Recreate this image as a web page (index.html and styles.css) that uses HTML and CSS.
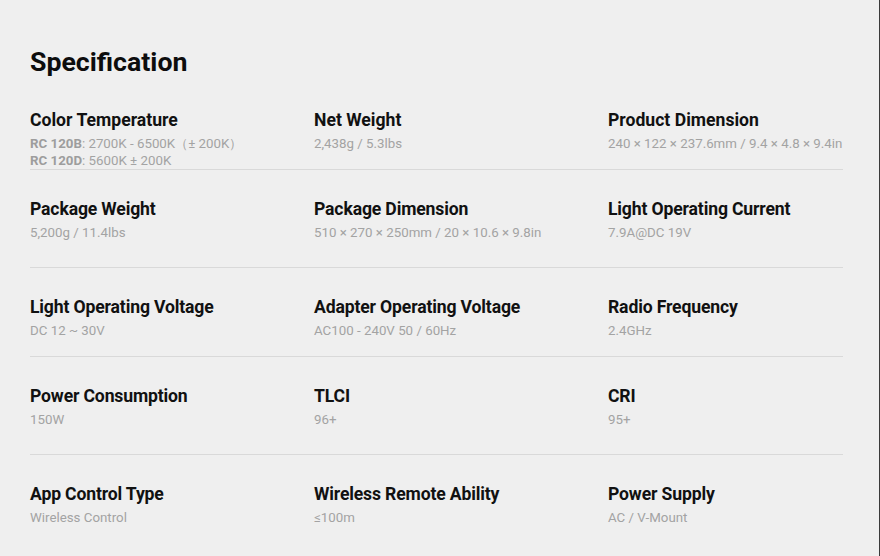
FILE: index.html
```html
<!DOCTYPE html>
<html lang="en">
<head>
<meta charset="utf-8">
<title>Specification</title>
<link rel="stylesheet" href="styles.css">
</head>
<body>
<main class="page">
  <h1 class="title">Specification</h1>
  <section class="spec-row row-1">
    <div class="spec spec-c1">
      <div class="label">Color Temperature</div>
      <div class="value"><b>RC 120B</b>: 2700K - 6500K（± 200K）</div>
      <div class="value"><b>RC 120D</b>: 5600K ± 200K</div>
    </div>
    <div class="spec spec-c2">
      <div class="label">Net Weight</div>
      <div class="value">2,438g / 5.3lbs</div>
    </div>
    <div class="spec spec-c3">
      <div class="label">Product Dimension</div>
      <div class="value">240 × 122 × 237.6mm / 9.4 × 4.8 × 9.4in</div>
    </div>
  </section>
  <section class="spec-row row-2">
    <div class="spec">
      <div class="label">Package Weight</div>
      <div class="value">5,200g / 11.4lbs</div>
    </div>
    <div class="spec">
      <div class="label">Package Dimension</div>
      <div class="value">510 × 270 × 250mm / 20 × 10.6 × 9.8in</div>
    </div>
    <div class="spec">
      <div class="label">Light Operating Current</div>
      <div class="value">7.9A@DC 19V</div>
    </div>
  </section>
  <section class="spec-row row-3">
    <div class="spec">
      <div class="label">Light Operating Voltage</div>
      <div class="value">DC 12 ~ 30V</div>
    </div>
    <div class="spec">
      <div class="label">Adapter Operating Voltage</div>
      <div class="value">AC100 - 240V 50 / 60Hz</div>
    </div>
    <div class="spec">
      <div class="label">Radio Frequency</div>
      <div class="value">2.4GHz</div>
    </div>
  </section>
  <section class="spec-row row-4">
    <div class="spec">
      <div class="label">Power Consumption</div>
      <div class="value">150W</div>
    </div>
    <div class="spec">
      <div class="label">TLCI</div>
      <div class="value">96+</div>
    </div>
    <div class="spec">
      <div class="label">CRI</div>
      <div class="value">95+</div>
    </div>
  </section>
  <section class="spec-row row-5">
    <div class="spec">
      <div class="label">App Control Type</div>
      <div class="value">Wireless Control</div>
    </div>
    <div class="spec">
      <div class="label">Wireless Remote Ability</div>
      <div class="value">≤100m</div>
    </div>
    <div class="spec">
      <div class="label">Power Supply</div>
      <div class="value">AC / V-Mount</div>
    </div>
  </section>
</main>
</body>
</html>
```
FILE: styles.css
```css
html, body {
  margin: 0;
  padding: 0;
}
body {
  background: #efefef;
  font-family: Roboto, "Liberation Sans", Arial, sans-serif;
  color: #111;
  height: 556px;
  overflow: hidden;
  border-right: 1px solid #3a3a3a;
  box-sizing: border-box;
}
.page {
  padding: 46px 0 0 30px;
  width: 813px;
}
.title {
  margin: 0 0 31px;
  font-size: 26.7px;
  line-height: 32px;
  font-weight: 700;
  color: #0d0d0d;
}
.spec-row {
  display: grid;
  grid-template-columns: 284px 294px 1fr;
  border-bottom: 1px solid #d9d9d9;
  padding: 27px 0;
}
.row-1 {
  padding: 0;
}
.row-2 {
  padding: 28px 0 26px;
}
.row-3 {
  padding: 28px 0 17px;
}
.row-4 {
  padding: 28px 0 26px;
}
.row-5 {
  padding-top: 28px;
  border-bottom: none;
}
.label {
  font-size: 17.6px;
  line-height: 22px;
  font-weight: 700;
  color: #111;
  margin-bottom: 4px;
}
.row-2 .label,
.row-3 .label,
.row-4 .label,
.row-5 .label {
  letter-spacing: -0.15px;
}
.value {
  font-size: 13.3px;
  line-height: 17px;
  color: #a3a3a3;
  white-space: nowrap;
}
.value b {
  font-weight: 700;
  color: #9d9d9d;
}
```
